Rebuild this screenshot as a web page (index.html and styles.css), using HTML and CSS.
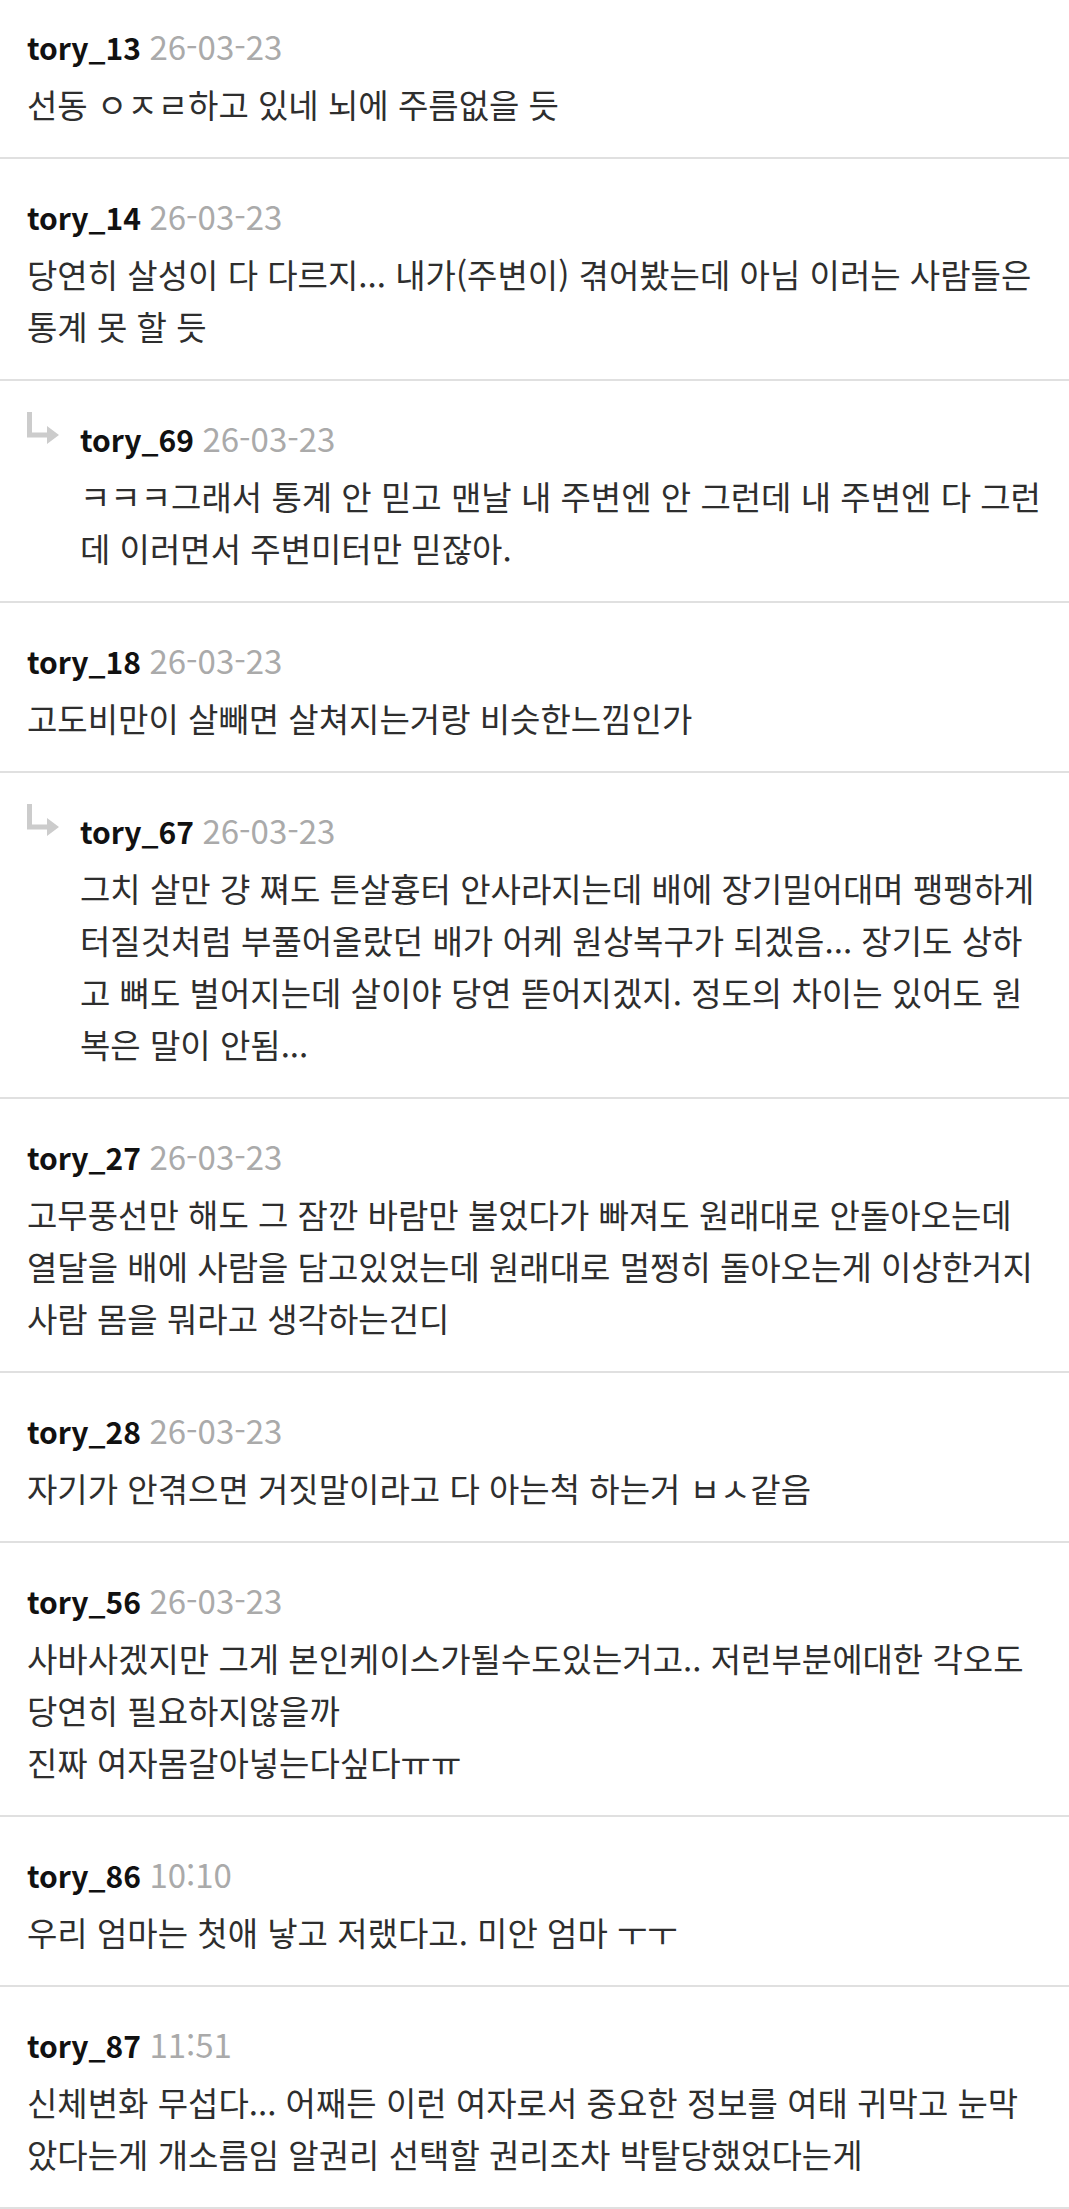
FILE: index.html
```html
<!DOCTYPE html>
<html lang="ko">
<head>
    <meta charset="UTF-8">
    <meta name="viewport" content="width=device-width, initial-scale=1.0">
    <title>댓글</title>
    <link rel="stylesheet" href="styles.css">
</head>
<body>
    <div class="comments">
        <div class="comment first">
            <div class="meta"><span class="name">tory_13</span> <span class="date">26-03-23</span></div>
            <p class="text">선동 ㅇㅈㄹ하고 있네 뇌에 주름없을 듯</p>
        </div>

        <div class="comment">
            <div class="meta"><span class="name">tory_14</span> <span class="date">26-03-23</span></div>
            <p class="text">당연히 살성이 다 다르지... 내가(주변이) 겪어봤는데 아님 이러는 사람들은<br>통계 못 할 듯</p>
        </div>

        <div class="comment reply">
            <svg class="reply-icon" width="32" height="32" viewBox="0 0 32 32">
                <path d="M2.5 0 V23 H22" fill="none" stroke="#cccccc" stroke-width="5"/>
                <path d="M20 14 L32 23 L20 32 Z" fill="#cccccc"/>
            </svg>
            <div class="body">
                <div class="meta"><span class="name">tory_69</span> <span class="date">26-03-23</span></div>
                <p class="text">ㅋㅋㅋ그래서 통계 안 믿고 맨날 내 주변엔 안 그런데 내 주변엔 다 그런<br>데 이러면서 주변미터만 믿잖아.</p>
            </div>
        </div>

        <div class="comment">
            <div class="meta"><span class="name">tory_18</span> <span class="date">26-03-23</span></div>
            <p class="text">고도비만이 살빼면 살쳐지는거랑 비슷한느낌인가</p>
        </div>

        <div class="comment reply">
            <svg class="reply-icon" width="32" height="32" viewBox="0 0 32 32">
                <path d="M2.5 0 V23 H22" fill="none" stroke="#cccccc" stroke-width="5"/>
                <path d="M20 14 L32 23 L20 32 Z" fill="#cccccc"/>
            </svg>
            <div class="body">
                <div class="meta"><span class="name">tory_67</span> <span class="date">26-03-23</span></div>
                <p class="text">그치 살만 걍 쪄도 튼살흉터 안사라지는데 배에 장기밀어대며 팽팽하게<br>터질것처럼 부풀어올랐던 배가 어케 원상복구가 되겠음... 장기도 상하<br>고 뼈도 벌어지는데 살이야 당연 뜯어지겠지. 정도의 차이는 있어도 원<br>복은 말이 안됨...</p>
            </div>
        </div>

        <div class="comment">
            <div class="meta"><span class="name">tory_27</span> <span class="date">26-03-23</span></div>
            <p class="text">고무풍선만 해도 그 잠깐 바람만 불었다가 빠져도 원래대로 안돌아오는데<br>열달을 배에 사람을 담고있었는데 원래대로 멀쩡히 돌아오는게 이상한거지<br>사람 몸을 뭐라고 생각하는건디</p>
        </div>

        <div class="comment">
            <div class="meta"><span class="name">tory_28</span> <span class="date">26-03-23</span></div>
            <p class="text">자기가 안겪으면 거짓말이라고 다 아는척 하는거 ㅂㅅ같음</p>
        </div>

        <div class="comment">
            <div class="meta"><span class="name">tory_56</span> <span class="date">26-03-23</span></div>
            <p class="text">사바사겠지만 그게 본인케이스가될수도있는거고.. 저런부분에대한 각오도<br>당연히 필요하지않을까<br>진짜 여자몸갈아넣는다싶다ㅠㅠ</p>
        </div>

        <div class="comment">
            <div class="meta"><span class="name">tory_86</span> <span class="date">10:10</span></div>
            <p class="text">우리 엄마는 첫애 낳고 저랬다고. 미안 엄마 ㅜㅜ</p>
        </div>

        <div class="comment">
            <div class="meta"><span class="name">tory_87</span> <span class="date">11:51</span></div>
            <p class="text">신체변화 무섭다... 어째든 이런 여자로서 중요한 정보를 여태 귀막고 눈막<br>았다는게 개소름임 알권리 선택할 권리조차 박탈당했었다는게</p>
        </div>
    </div>
</body>
</html>
```

FILE: styles.css
```css
body {
    margin: 0;
    background: #ffffff;
    font-family: "Noto Sans CJK KR", "Noto Sans", sans-serif;
    color: #333333;
}

.comments {
    display: flex;
    flex-direction: column;
}

.comment {
    padding: 37px 18px 27px 27px;
    border-bottom: 2px solid #e0e0e0;
}

.comment.first {
    padding-top: 26px;
}

.comment.reply {
    display: flex;
    align-items: flex-start;
}

.reply-icon {
    flex: none;
    margin-top: -6px;
    margin-right: 21px;
}

.body {
    flex: 1;
}

.meta {
    height: 40px;
    line-height: 40px;
    white-space: nowrap;
}

.name {
    font-size: 30px;
    font-weight: bold;
    color: #111111;
}

.date {
    margin-left: 4px;
    font-size: 33px;
    color: #aaaaaa;
}

.text {
    margin: 12px 0 0;
    font-size: 33px;
    line-height: 52px;
    color: #2e2e2e;
}
```
